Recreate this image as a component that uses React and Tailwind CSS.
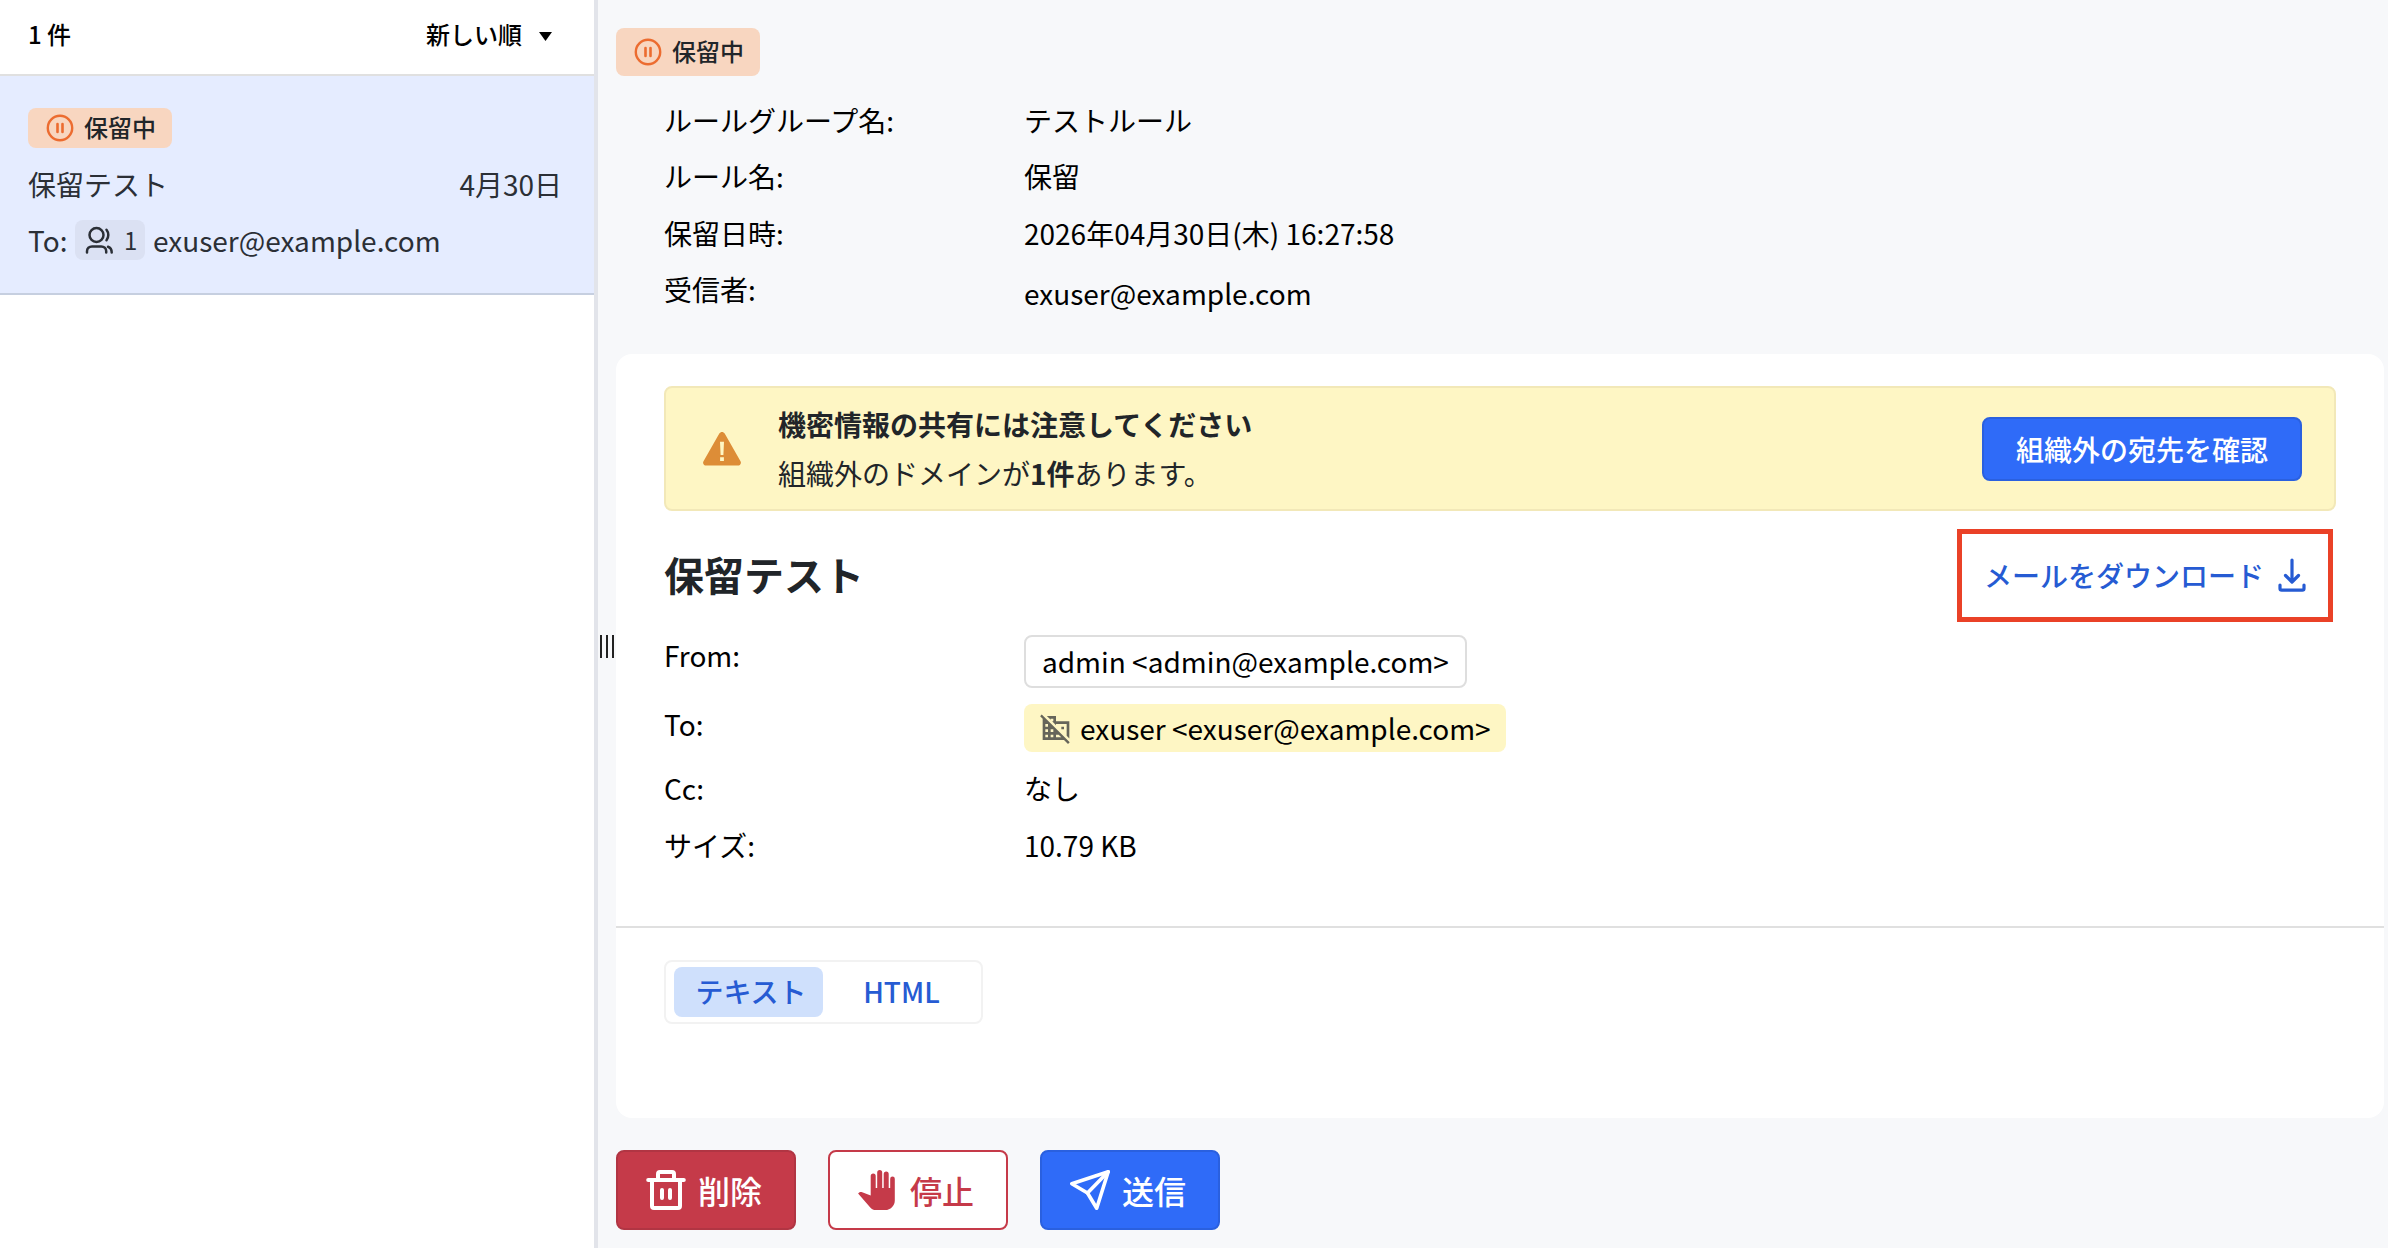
import React, { useState } from 'react';
import { MdDomainDisabled } from 'react-icons/md';

const PauseIcon = ({ className }) => (
    <svg viewBox="0 0 32 32" fill="none" stroke="currentColor" strokeLinecap="round" className={className}>
        <circle cx="16" cy="16" r="12.2" strokeWidth="2.4" />
        <path d="M13.5 12v8M18.5 12v8" strokeWidth="2.6" />
    </svg>
);

const UsersIcon = ({ className }) => (
    <svg viewBox="0 0 28 28" fill="none" stroke="currentColor" strokeWidth="2.5" strokeLinecap="round" className={className}>
        <circle cx="11.5" cy="9" r="7" />
        <path d="M2 26.500v-1.200c0-3 2.200-4.900 5-4.900h9.200c2.800 0 5 1.900 5 4.900v1.200" />
        <path d="M21.500 3.700c2.400 3 2.400 7.600 0 10.600M23 20.800c2.400.8 3.700 2.500 3.700 5.700" />
    </svg>
);

const WarningIcon = ({ className }) => (
    <svg viewBox="0 0 38 34" className={className}>
        <path
            d="M16.3 1.6c1.200-2.100 4.200-2.100 5.400 0l15.800 27.600c1.200 2.100-.3 4.400-2.700 4.400H3.200C.8 33.600-.7 31.300.5 29.200z"
            fill="#dd8d37"
        />
        <path d="M17 9.800h4l-.6 13.200h-2.800zM17.100 25.200h3.800v3.800h-3.800z" fill="#fef6c4" />
    </svg>
);

const DownloadIcon = ({ className }) => (
    <svg viewBox="0 0 28 34" fill="none" stroke="currentColor" strokeWidth="3.200" strokeLinecap="round" strokeLinejoin="round" className={className}>
        <path d="M14 2v21M7.500 17.500l6.500 6.500 6.500-6.500" />
        <path d="M2 27v3.500c0 1 .7 1.700 1.700 1.700h20.600c1 0 1.700-.7 1.700-1.700V27" />
    </svg>
);

const TrashIcon = ({ className }) => (
    <svg viewBox="0 0 40 40" fill="none" stroke="currentColor" strokeWidth="4" strokeLinecap="round" strokeLinejoin="round" className={className}>
        <path d="M2.200 10h35.600M6 10v26c0 1.200.8 2 2 2h24c1.200 0 2-.8 2-2V10" />
        <path d="M12 10V4c0-1.200.8-2 2-2h12c1.200 0 2 .8 2 2v6" />
        <path d="M16 20v8M24 20v8" />
    </svg>
);

const HandIcon = ({ className }) => (
    <svg viewBox="0 0 37 40" fill="currentColor" className={className}>
        <path d="M36.800 8.700a2.300 2.300 0 0 0-4.600 0V18h-1.500V4a2.500 2.500 0 0 0-5 0v14h-1.500V2.500a2.500 2.500 0 0 0-5 0V18h-1.500V6a2.500 2.500 0 0 0-5 0v19.500L4.200 22.200c-1.600-.7-3.200-.2-4.100 1.300l12.400 14.200c1.300 1.500 3.200 2.300 5.200 2.300h9.500c5.300 0 9.600-4.300 9.600-9.600z" />
    </svg>
);

const SendIcon = ({ className }) => (
    <svg viewBox="0 0 40 40" fill="none" stroke="currentColor" strokeWidth="3.600" strokeLinecap="round" strokeLinejoin="round" className={className}>
        <path d="M38.200 1.800L1.800 13.800l15.700 9.200 9.200 15.200z" />
        <path d="M17.500 23L38.200 1.800" />
    </svg>
);

const StatusBadge = ({ className }) => (
    <div className={`inline-flex items-center gap-2 rounded-lg bg-[#f8d6c0] px-4 text-2xl leading-none font-medium text-[#212529] ${className}`}>
        <PauseIcon className="h-8 w-8 text-[#ec6c30]" />
        <span className="pb-[2px]">保留中</span>
    </div>
);

const Field = ({ label, className, children }) => (
    <div className={`flex items-start ${className}`}>
        <div className="w-[360px] shrink-0 leading-[40px]">{label}</div>
        {children}
    </div>
);

const ruleFields = [
    { label: 'ルールグループ名:', value: 'テストルール' },
    { label: 'ルール名:', value: '保留' },
    { label: '保留日時:', value: '2026年04月30日(木) 16:27:58' },
];

const App = () => {
    const [tab, setTab] = useState('text');

    return (
        <div lang="ja" className="flex h-[1248px] w-[2388px] overflow-hidden bg-white font-['Noto_Sans_CJK_JP',sans-serif] text-[28px] leading-[40px] text-black">
            {/* Mail list */}
            <aside className="flex w-[594px] shrink-0 flex-col">
                <div className="flex h-[76px] items-center justify-between border-b-2 border-[#e0e0e0] pr-[42px] pb-[6px] pl-7 text-2xl leading-none font-medium">
                    <span>1 件</span>
                    <button className="flex items-center gap-[17px]">
                        新しい順
                        <svg viewBox="0 0 13 9" className="mt-1 h-[9px] w-[13px]">
                            <path d="M0 0h13L6.500 9z" fill="currentColor" />
                        </svg>
                    </button>
                </div>
                <div className="flex h-[219px] flex-col border-b-2 border-[#c6cfe0] bg-[#e5ecff] px-7 pt-8 text-[#2b2f36]">
                    <div className="flex h-10">
                        <StatusBadge className="h-10" />
                    </div>
                    <div className="mt-4 flex h-10 items-center justify-between pr-1">
                        <span>保留テスト</span>
                        <span>4月30日</span>
                    </div>
                    <div className="mt-4 flex h-10 items-center">
                        <span className="w-[47px]">To:</span>
                        <span className="mr-2 flex h-10 w-[70px] items-center gap-[11px] rounded-lg bg-[#dbe1f3] pl-[10px] text-2xl">
                            <UsersIcon className="h-7 w-7" />
                            1
                        </span>
                        <span>exuser@example.com</span>
                    </div>
                </div>
            </aside>

            {/* Resize handle */}
            <div className="flex w-[22px] shrink-0 items-start gap-1 border-l-4 border-[#e2e4ea] bg-[#f7f8fa] pt-[635px] pl-[2px]">
                <i className="h-[23px] w-[2px] bg-[#222]" />
                <i className="h-[23px] w-[2px] bg-[#222]" />
                <i className="h-[23px] w-[2px] bg-[#222]" />
            </div>

            <main className="flex flex-1 flex-col bg-[#f7f8fa] pt-7 pr-1">
                <div className="flex h-12">
                    <StatusBadge className="h-12" />
                </div>

                <div className="mt-6 flex h-[254px] flex-col gap-4 pl-12">
                    {ruleFields.map((field) => (
                        <Field key={field.label} label={field.label} className="h-[40.400px]">
                            <div>{field.value}</div>
                        </Field>
                    ))}
                    <Field label="受信者:">
                        <div className="pt-1">exuser@example.com</div>
                    </Field>
                </div>

                {/* Mail detail */}
                <section className="h-[764px] rounded-2xl bg-white pt-8">
                    <div className="mx-12 flex h-[125px] items-center rounded-lg border-2 border-[#f2e8b8] bg-[#fef6c4] pr-8 pl-[37px] text-[#212529]">
                        <WarningIcon className="h-[34px] w-[38px]" />
                        <div className="ml-[37px] flex-1 leading-[49px]">
                            <p className="font-bold">機密情報の共有には注意してください</p>
                            <p>
                                組織外のドメインが<b>1件</b>あります。
                            </p>
                        </div>
                        <button className="h-16 w-[320px] rounded-lg border-2 border-[#2a60df] bg-[#2f6bf8] font-medium text-white">
                            組織外の宛先を確認
                        </button>
                    </div>

                    <div className="mt-[18px] flex h-[93px] items-center justify-between pr-[51px] pl-12">
                        <h1 className="pb-1 text-[40px] font-bold text-[#212529]">保留テスト</h1>
                        <button className="flex h-[93px] w-[376px] items-center gap-[14px] border-[5px] border-[#ea4127] pb-[2px] pl-[22px] font-medium text-[#265bd3]">
                            メールをダウンロード
                            <DownloadIcon className="h-[34px] w-7" />
                        </button>
                    </div>

                    <div className="mt-[13px] flex h-[291px] flex-col pl-12">
                        <Field label="From:" className="h-[69px]">
                            <div className="flex h-[53px] items-center rounded-lg border-2 border-[#dedede] px-4 pb-[2px]">admin &lt;admin@example.com&gt;</div>
                        </Field>
                        <Field label="To:" className="h-16">
                            <div className="flex h-12 items-center gap-2 rounded-lg bg-[#fef6c4] pr-[15px] pl-4">
                                <MdDomainDisabled className="h-8 w-8 text-[#66655a]" />
                                exuser &lt;exuser@example.com&gt;
                            </div>
                        </Field>
                        <Field label="Cc:" className="h-[57px]">
                            <div>なし</div>
                        </Field>
                        <Field label="サイズ:">
                            <div>10.79 KB</div>
                        </Field>
                    </div>

                    <div className="border-t-2 border-[#e0e0e0] px-12 pt-8">
                        <div className="flex h-16 w-[319px] items-center rounded-lg border-2 border-[#f2f2f2] pl-2 font-medium text-[#265bd3]">
                            <button
                                onClick={() => setTab('text')}
                                className={`h-[50px] w-[149px] rounded-lg pb-[2px] pl-[5px] ${tab === 'text' ? 'bg-[#cfe0fc]' : ''}`}
                            >
                                テキスト
                            </button>
                            <button
                                onClick={() => setTab('html')}
                                className={`ml-1 h-[50px] w-[149px] rounded-lg pb-[2px] ${tab === 'html' ? 'bg-[#cfe0fc]' : ''}`}
                            >
                                HTML
                            </button>
                        </div>
                    </div>
                </section>

                <div className="mt-8 flex gap-8 text-[32px] font-medium text-white">
                    <button className="flex h-20 w-[180px] items-center gap-3 rounded-lg border-2 border-[#b13543] bg-[#c53a49] pl-7">
                        <TrashIcon className="h-10 w-10" />
                        削除
                    </button>
                    <button className="flex h-20 w-[180px] items-center gap-[15px] rounded-lg border-2 border-[#c53a49] bg-white pl-7 text-[#c53a49]">
                        <HandIcon className="h-10 w-[37px]" />
                        停止
                    </button>
                    <button className="flex h-20 w-[180px] items-center gap-3 rounded-lg border-2 border-[#2a60df] bg-[#2f6bf8] pl-7">
                        <SendIcon className="h-10 w-10" />
                        送信
                    </button>
                </div>
            </main>
        </div>
    );
};

export default App;
